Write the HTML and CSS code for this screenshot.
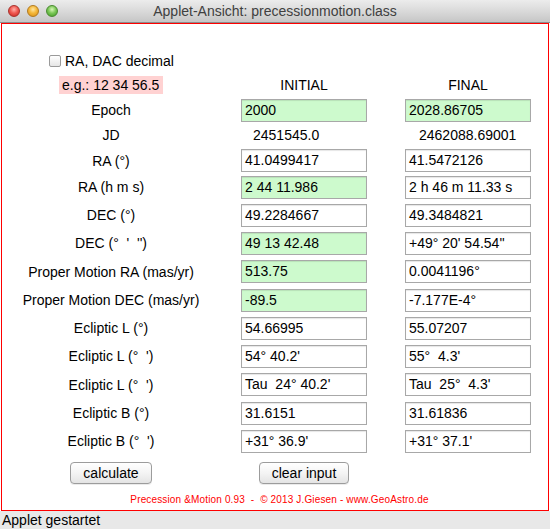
FILE: index.html
```html
<!DOCTYPE html>
<html>
<head>
<meta charset="utf-8">
<title>Applet-Ansicht: precessionmotion.class</title>
<link rel="stylesheet" href="styles.css">
</head>
<body>
<div class="window">
  <div class="titlebar">
    <div class="lights">
      <span class="light red"></span>
      <span class="light amber"></span>
      <span class="light green"></span>
    </div>
    <div class="title">Applet-Ansicht: precessionmotion.class</div>
    <div></div>
  </div>
  <div class="applet">
    <div class="grid">
      <label class="chk ca"><span class="box"></span>RA, DAC decimal</label>

      <span class="hint ca">e.g.: 12 34 56.5</span>
      <span class="head cb">INITIAL</span>
      <span class="head cc">FINAL</span>

      <span class="lbl ca">Epoch</span>
      <div class="field in cb">2000</div>
      <div class="field in cc">2028.86705</div>

      <span class="lbl ca">JD</span>
      <span class="val cb">2451545.0</span>
      <span class="val val2 cc">2462088.69001</span>

      <span class="lbl ca">RA (°)</span>
      <div class="field cb">41.0499417</div>
      <div class="field cc">41.5472126</div>

      <span class="lbl ca">RA (h m s)</span>
      <div class="field in cb">2 44 11.986</div>
      <div class="field cc">2 h 46 m 11.33 s</div>

      <span class="lbl ca">DEC (°)</span>
      <div class="field cb">49.2284667</div>
      <div class="field cc">49.3484821</div>

      <span class="lbl ca">DEC (°&nbsp;&nbsp;'&nbsp;&nbsp;'')</span>
      <div class="field in cb">49 13 42.48</div>
      <div class="field cc">+49° 20' 54.54''</div>

      <span class="lbl ca">Proper Motion RA (mas/yr)</span>
      <div class="field in cb">513.75</div>
      <div class="field cc">0.0041196°</div>

      <span class="lbl ca">Proper Motion DEC (mas/yr)</span>
      <div class="field in cb">-89.5</div>
      <div class="field cc">-7.177E-4°</div>

      <span class="lbl ca">Ecliptic L (°)</span>
      <div class="field cb">54.66995</div>
      <div class="field cc">55.07207</div>

      <span class="lbl ca">Ecliptic L (°&nbsp;&nbsp;')</span>
      <div class="field cb">54° 40.2'</div>
      <div class="field cc">55°&nbsp;&nbsp;4.3'</div>

      <span class="lbl ca">Ecliptic L (°&nbsp;&nbsp;')</span>
      <div class="field cb">Tau&nbsp;&nbsp;24° 40.2'</div>
      <div class="field cc">Tau&nbsp;&nbsp;25°&nbsp;&nbsp;4.3'</div>

      <span class="lbl ca">Ecliptic B (°)</span>
      <div class="field cb">31.6151</div>
      <div class="field cc">31.61836</div>

      <span class="lbl ca">Ecliptic B (°&nbsp;&nbsp;')</span>
      <div class="field cb">+31° 36.9'</div>
      <div class="field cc">+31° 37.1'</div>

      <button class="btn ca" type="button">calculate</button>
      <button class="btn cb" type="button">clear input</button>
    </div>
    <div class="footer">Precession &amp;Motion 0.93  -  © 2013 J.Giesen - www.GeoAstro.de</div>
  </div>
  <div class="status">Applet gestartet</div>
</div>
</body>
</html>
```
FILE: styles.css
```css
html, body {
  margin: 0;
  padding: 0;
  background: #ffffff;
}

body {
  font-family: "Liberation Sans", Arial, sans-serif;
  font-size: 14px;
  color: #000;
}

.window {
  width: 550px;
  height: 529px;
  display: flex;
  flex-direction: column;
}

/* ---------- title bar ---------- */
.titlebar {
  height: 22px;
  border-bottom: 1px solid #8c8c8c;
  background: linear-gradient(#ececec, #d6d6d6 60%, #c6c6c6);
  display: grid;
  grid-template-columns: 1fr auto 1fr;
  align-items: center;
}

.lights {
  display: flex;
  gap: 7px;
  margin-left: 8px;
}

.light {
  width: 12px;
  height: 12px;
  border-radius: 50%;
  box-sizing: border-box;
}

.light.red {
  background: radial-gradient(circle at 50% 35%, #ffb0a8 0, #f05a52 45%, #c8231c 100%);
  border: 1px solid #a8322c;
}

.light.amber {
  background: radial-gradient(circle at 50% 35%, #ffe6a0 0, #f4b83a 45%, #d88d12 100%);
  border: 1px solid #b27a20;
}

.light.green {
  background: radial-gradient(circle at 50% 35%, #d8f6b8 0, #7cc858 45%, #3e9a24 100%);
  border: 1px solid #4a8a30;
}

.title {
  font-size: 14px;
  color: #404040;
  white-space: nowrap;
}

/* ---------- applet area ---------- */
.applet {
  margin: 0 1px;
  height: 488px;
  box-sizing: border-box;
  border: 1px solid #ff0000;
  padding-top: 26px;
  display: flex;
  flex-direction: column;
}

.grid {
  display: grid;
  grid-template-columns: 218px 21px 126px 38px 126px;
  grid-template-rows: 22px 26px 24px 26px 25px 28px 28px 28px 29px 28px 28px 28px 29px 28px 28px 36px;
  align-items: center;
}

.ca { grid-column: 1; }
.cb { grid-column: 3; }
.cc { grid-column: 5; }

.chk {
  grid-row: 1;
  justify-self: start;
  margin-left: 47px;
  display: flex;
  align-items: center;
  gap: 4px;
  white-space: nowrap;
}

.box {
  width: 12px;
  height: 12px;
  box-sizing: border-box;
  border: 1px solid #9a9a9a;
  border-radius: 2px;
  background: linear-gradient(#ffffff, #e6e6e6);
}

.hint {
  justify-self: start;
  margin-left: 57px;
  padding: 0 4px 0 3px;
  height: 18px;
  line-height: 18px;
  background: #ffd2d2;
  white-space: nowrap;
}

.head {
  text-align: center;
}

.lbl {
  justify-self: center;
  white-space: nowrap;
}

.field {
  height: 23px;
  box-sizing: border-box;
  border: 1px solid #a8a8a8;
  box-shadow: inset 0 1px 1px rgba(0, 0, 0, 0.10);
  padding: 0 3px;
  line-height: 21px;
  background: #ffffff;
  white-space: nowrap;
  overflow: hidden;
}

.field.in {
  background: #cdfacd;
}

.val {
  padding-left: 12px;
  white-space: nowrap;
}

.val2 {
  padding-left: 14px;
}

.btn {
  justify-self: center;
  height: 22px;
  padding: 0 12px;
  border: 1px solid #9c9c9c;
  border-radius: 4px;
  background: linear-gradient(#ffffff, #f4f4f4 50%, #e4e4e4);
  box-shadow: 0 1px 0 rgba(0, 0, 0, 0.08);
  font-family: "Liberation Sans", Arial, sans-serif;
  font-size: 14px;
  color: #000;
  line-height: 20px;
}

.footer {
  height: 18px;
  line-height: 18px;
  padding-left: 9px;
  text-align: center;
  color: #ff0000;
  font-size: 10px;
  letter-spacing: 0.15px;
  white-space: pre;
}

/* ---------- status bar ---------- */
.status {
  height: 18px;
  line-height: 18px;
  background: #e8e8e8;
  padding-left: 2px;
  font-size: 14px;
}
```
